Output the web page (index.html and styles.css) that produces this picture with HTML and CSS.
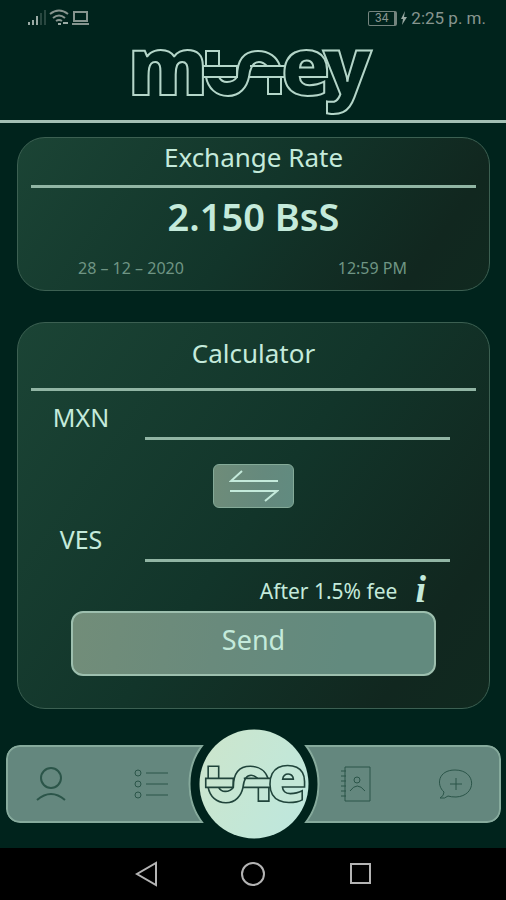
FILE: index.html
```html
<!DOCTYPE html>
<html lang="en">
<head>
<meta charset="utf-8">
<meta name="viewport" content="width=device-width, initial-scale=1">
<title>money</title>
<link rel="stylesheet" href="styles.css">
</head>
<body>
<svg class="defs" aria-hidden="true">
  <symbol id="link" viewBox="-2 -2 84 50" overflow="visible">
    <path d="M2 16V1h13v15M-1 16h34v11H-1zM46 16h35v11H45M64 27v17h13V27"/>
    <path d="M2 27C4 38 12 46 24 46C36 46 43 37 45 27C46 18 49 12 55 12C59 12 61 14 63 16"/>
    <path d="M15 27C17 31 20 32 23 32C28 32 31 30 33 27C33 10 40 1 54 1C65 1 73 7 76 16"/>
  </symbol>
</svg>
<div class="status">
  <div class="status-group">
    <svg width="62" height="18" viewBox="0 0 62 18" aria-hidden="true">
      <path d="M1 16v-3M5 16v-5M9 16V7" class="st-bright"/>
      <path d="M13 16V4M17 16V1" class="st-dim"/>
      <path d="M22 5q9-7 18 0M25 9q6-5 12 0M28 12q3-2 6 0" class="st-wifi"/>
      <path d="M30 15h3M35 14h5" class="st-bright"/>
      <path d="M46 3h13v9H46zM44 15h17" class="st-wifi"/>
    </svg>
  </div>
  <div class="status-group">
    <span class="battery">34</span>
    <svg width="6" height="14" viewBox="0 0 6 14" aria-hidden="true"><path class="bolt" d="M4 0L0 8h2L1 14l5-8H3z"/></svg>
    <span class="clock">2:25 p. m.</span>
  </div>
</div>
<header class="header">
  <svg class="logo" width="242" height="70" viewBox="0 0 242 70" role="img" aria-label="money">
    <text x="-4" y="49" class="logo-text">m</text>
    <use href="#link" x="70" y="2" width="84" height="50"/>
    <text x="191" y="49" class="logo-text">y</text>
    <text x="149" y="49" class="logo-text">e</text>
  </svg>
</header>
<main class="main">
  <section class="card rate">
    <h1 class="title">Exchange Rate</h1>
    <p class="value">2.150 BsS</p>
    <div class="stamp"><span>28 – 12 – 2020</span><span>12:59 PM</span></div>
  </section>
  <form class="card calc">
    <h2 class="title">Calculator</h2>
    <div class="field">
      <label for="mxn">MXN</label>
      <input id="mxn" type="text" inputmode="decimal">
    </div>
    <button class="swap" type="button" aria-label="Swap currencies">
      <svg width="50" height="34" viewBox="0 0 50 34"><path d="M49 12H2L13 2M1 22h47L36 32"/></svg>
    </button>
    <div class="field">
      <label for="ves">VES</label>
      <input id="ves" type="text" inputmode="decimal">
    </div>
    <div class="fee"><span>After 1.5% fee</span><button class="info" type="button">i</button></div>
    <button class="send" type="button">Send</button>
  </form>
</main>
<div class="dock">
  <nav class="tabs">
    <a href="#profile" aria-label="Profile"><svg width="44" height="44" viewBox="0 0 44 44" class="bold"><circle cx="22" cy="16" r="10"/><path d="M8 38q14-12 28 0"/></svg></a>
    <a href="#history" aria-label="History"><svg width="44" height="44" viewBox="0 0 44 44"><circle cx="8" cy="11" r="3"/><circle cx="8" cy="22" r="3"/><circle cx="8" cy="33" r="3"/><path d="M16 11h22M16 22h22M16 33h22"/></svg></a>
    <span class="gap"></span>
    <a href="#contacts" aria-label="Contacts"><svg width="44" height="44" viewBox="0 0 44 44"><path d="M12 5h25v34H12zM8 9h5M8 14h5M8 19h5M8 24h5M8 29h5M8 34h5M17 29q7-10 15 0"/><circle cx="24" cy="18" r="3"/></svg></a>
    <a href="#support" aria-label="Support"><svg width="44" height="44" viewBox="0 0 44 44"><path d="M10 30C2 23 4 8 21 8C43 8 43 34 22 35Q17 35 14 34Q11 37 6 36Q10 34 10 30M22 16v12M16 22h12"/></svg></a>
  </nav>
  <a class="home" href="#home" aria-label="Home">
    <svg width="102" height="48" viewBox="0 0 126 59">
      <use href="#link" x="3" y="4" width="84" height="50"/>
      <text x="80" y="51" class="home-text">e</text>
    </svg>
  </a>
</div>
<footer class="system">
  <button type="button" aria-label="Back"><svg width="24" height="28" viewBox="0 0 24 28"><path d="M22 3v22L3 14z"/></svg></button>
  <button type="button" aria-label="Home screen"><svg width="24" height="28" viewBox="0 0 24 28"><circle cx="12" cy="14" r="11"/></svg></button>
  <button type="button" aria-label="Recent apps"><svg width="24" height="28" viewBox="0 0 24 28"><path d="M3 4h19v19H3z"/></svg></button>
</footer>
</body>
</html>
```
FILE: styles.css
```css
* {
  box-sizing: border-box;
}

body {
  margin: 0;
  min-height: 100vh;
  display: flex;
  flex-direction: column;
  background: #00231c;
  color: #c4eadb;
  font-family: "Noto Sans", "Open Sans", sans-serif;
}

button {
  font: inherit;
  color: inherit;
  cursor: pointer;
}

h1, h2, p {
  margin: 0;
}

svg {
  display: block;
  fill: none;
}

.defs {
  position: absolute;
  width: 0;
  height: 0;
}

/* status bar */
.status {
  display: flex;
  justify-content: space-between;
  align-items: center;
  height: 36px;
  padding: 0 20px 0 28px;
  color: #87958f;
  font: 17px/20px Roboto, sans-serif;
}

.status-group {
  display: flex;
  align-items: center;
  gap: 4px;
}

.st-bright { stroke: #9aaaa4; stroke-width: 2; }
.st-dim { stroke: #294740; stroke-width: 2; }
.st-wifi { stroke: #87958f; stroke-width: 2; }

.battery {
  width: 29px;
  border: 1px solid #74847e;
  border-right-width: 3px;
  border-radius: 2px;
  font-size: 12px;
  line-height: 13px;
  text-align: center;
}

.bolt { fill: #9aaaa4; }

/* header */
.header {
  height: 87px;
  padding-top: 10px;
  border-bottom: 3px solid #a3bfb4;
}

.logo {
  margin: 0 auto;
  stroke: #b4d6c9;
  stroke-width: 2;
  overflow: visible;
}

.logo-text, .home-text {
  font: 800 80px "Open Sans", sans-serif;
}

.logo-text { fill: #00231c; }

/* cards */
.main {
  display: flex;
  flex-direction: column;
  gap: 31px;
  padding: 14px 16px 0 17px;
}

.card {
  border: 1px solid #3c6052;
  border-radius: 28px;
  background: linear-gradient(125deg, #1b4435, #12352a 50%, #11271f 85%, #10291f);
}

.title {
  margin: 0 13px;
  border-bottom: 3px solid #91b5a4;
  font-size: 26px;
  line-height: 32px;
  font-weight: 400;
  text-align: center;
}

.rate {
  height: 154px;
  padding-top: 3px;
}

.rate .title {
  height: 47px;
}

.value {
  padding-top: 8px;
  font-size: 38px;
  line-height: 40px;
  font-weight: 600;
  text-align: center;
}

.stamp {
  display: flex;
  justify-content: space-between;
  padding: 20px 82px 0 60px;
  color: #6f9584;
  font-size: 16px;
  line-height: 24px;
}

.calc {
  display: flex;
  flex-direction: column;
  height: 387px;
  padding-top: 14px;
}

.calc .title {
  height: 54px;
}

.field {
  display: flex;
  height: 49px;
  padding: 0 39px 0 25px;
}

.field label {
  width: 76px;
  padding-top: 10px;
  font-size: 25px;
  line-height: 32px;
  text-align: center;
}

.field input {
  flex: 1;
  min-width: 0;
  margin-left: 26px;
  padding: 8px;
  border: 0;
  border-bottom: 3px solid #91b5a4;
  background: none;
  color: inherit;
  font: inherit;
  font-size: 24px;
  outline: 0;
}

.swap {
  display: grid;
  place-items: center;
  width: 81px;
  height: 44px;
  margin: 24px auto 5px;
  border: 1px solid #84aa98;
  border-radius: 6px;
  background: linear-gradient(100deg, #6f8c79, #65897d 60%, #618b80);
}

.swap svg {
  stroke: #c4eadb;
  stroke-width: 2;
}

.fee {
  display: flex;
  justify-content: flex-end;
  align-items: center;
  height: 49px;
  padding: 8px 63px 0 0;
  gap: 18px;
  font-size: 21px;
}

.info {
  padding: 0 0 4px;
  border: 0;
  background: none;
  font: italic 700 38px/32px "Liberation Serif", serif;
}

.send {
  height: 65px;
  margin: 0 53px;
  padding: 0 0 8px;
  border: 2px solid #9dbfae;
  border-radius: 12px;
  background: linear-gradient(100deg, #728d79, #698a7c 40%, #628a7e 75%);
  font-size: 27px;
}

/* bottom navigation */
.dock {
  position: relative;
  margin: auto 5px 25px 6px;
}

.tabs {
  position: relative;
  display: flex;
  justify-content: space-between;
  align-items: center;
  height: 78px;
  padding: 0 21px;
  border: 2px solid #86aa9c;
  border-radius: 14px;
  background: #64877e;
  clip-path: inset(0 round 14px);
}

.tabs::before {
  content: "";
  position: absolute;
  top: 50%;
  left: 50%;
  width: 127px;
  height: 127px;
  border: 2px solid #86aa9c;
  border-radius: 50%;
  background: #00231c;
  transform: translate(-50%, -50%);
}

.tabs svg {
  stroke: #2b5549;
  stroke-width: 1;
}

.tabs .bold {
  stroke-width: 2;
}

.gap {
  width: 44px;
}

.home {
  position: absolute;
  top: 50%;
  left: 50%;
  display: grid;
  place-items: center;
  width: 109px;
  height: 109px;
  border-radius: 50%;
  background: linear-gradient(120deg, #cde5cb, #c3e7d7 60%, #bde7df);
  transform: translate(-50%, -50%);
}

.home svg {
  stroke: #20443b;
  stroke-width: 2;
  overflow: visible;
}

.home-text {
  fill: #c3e7d7;
}

/* system buttons */
.system {
  display: flex;
  justify-content: center;
  align-items: center;
  gap: 83px;
  height: 52px;
  background: #000;
}

.system button {
  padding: 0;
  border: 0;
  background: none;
}

.system svg {
  stroke: #b4b4b4;
  stroke-width: 2;
}
```
